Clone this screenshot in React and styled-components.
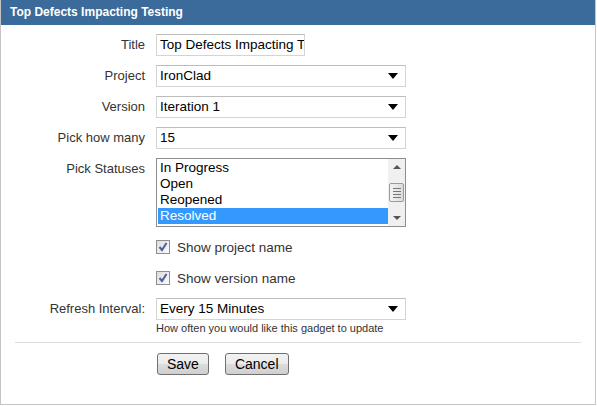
import React from 'react';
import styled, { createGlobalStyle } from 'styled-components';

const GlobalStyle = createGlobalStyle`
  html, body {
    margin: 0;
    padding: 0;
    background: #fff;
  }
  body {
    font-family: "Liberation Sans", Arial, sans-serif;
  }
`;

const Gadget = styled.div`
  width: 594px;
  height: 404px;
  border: 1px solid #c4c4c4;
  border-top: none;
  display: flex;
  flex-direction: column;
`;

const Header = styled.div`
  height: 25px;
  background: #3b6b9b;
  color: #fff;
  font-weight: bold;
  font-size: 12px;
  line-height: 25px;
  padding-left: 9px;
`;

const Form = styled.div`
  padding: 9px 0 0 0;
  display: grid;
  grid-template-columns: 144px 1fr;
  column-gap: 11px;
  row-gap: 9px;
  align-items: start;
`;

const Label = styled.div`
  text-align: right;
  font-size: 13px;
  color: #333;
  line-height: 21px;
`;

const TextInput = styled.div`
  width: 144px;
  height: 20px;
  border: 1px solid #d4d4d4;
  border-top-color: #bcbcbc;
  font-size: 13.5px;
  line-height: 20px;
  padding-left: 3px;
  white-space: nowrap;
  overflow: hidden;
  color: #000;
`;

const SelectBox = styled.div`
  width: 245px;
  height: 20px;
  border: 1px solid #d4d4d4;
  border-top-color: #bcbcbc;
  font-size: 13.5px;
  line-height: 20px;
  padding-left: 3px;
  display: flex;
  align-items: center;
  justify-content: space-between;
  color: #000;
`;

const Arrow = styled.span`
  width: 0;
  height: 0;
  margin-right: 7px;
  border-left: 5px solid transparent;
  border-right: 5px solid transparent;
  border-top: 6px solid #000;
`;

const ListBox = styled.div`
  width: 248px;
  height: 67px;
  border: 1px solid #8e8e8e;
  display: flex;
`;

const Options = styled.div`
  flex: 1;
  padding: 1px 0 0 1px;
`;

const Option = styled.div`
  height: 16px;
  line-height: 16px;
  font-size: 13.5px;
  padding-left: 2px;
  color: ${(p) => (p.selected ? '#fff' : '#000')};
  background: ${(p) => (p.selected ? '#3399ff' : 'transparent')};
`;

const Scrollbar = styled.div`
  width: 17px;
  background: #f0f0f0;
  display: flex;
  flex-direction: column;
  align-items: center;
  justify-content: space-between;
  padding: 6px 0;
`;

const ScrollArrow = styled.span`
  width: 0;
  height: 0;
  border-left: 4px solid transparent;
  border-right: 4px solid transparent;
  ${(p) => (p.up ? 'border-bottom: 4px solid #555;' : 'border-top: 4px solid #555;')}
`;

const Thumb = styled.div`
  width: 15px;
  height: 19px;
  border: 1px solid #9a9a9a;
  border-radius: 2px;
  background: linear-gradient(to right, #f4f4f4, #dcdcdc);
  display: flex;
  flex-direction: column;
  justify-content: center;
  align-items: center;
  gap: 2px;
  box-sizing: border-box;
`;

const Grip = styled.span`
  width: 8px;
  height: 1px;
  background: #777;
`;

const CheckRow = styled.label`
  display: flex;
  align-items: center;
  gap: 7px;
  font-size: 13.5px;
  color: #333;
  height: 22px;
`;

const CheckBox = styled.span`
  width: 12px;
  height: 12px;
  border: 1px solid #8f8f8f;
  background: linear-gradient(135deg, #dcdcdc, #fbfbfb);
  display: inline-flex;
  align-items: center;
  justify-content: center;
`;

const Field = styled.div`
  display: flex;
  flex-direction: column;
`;

const Hint = styled.div`
  font-size: 11px;
  color: #333;
  margin-top: 2px;
`;

const Divider = styled.hr`
  margin: 8px 14px 0 14px;
  border: none;
  border-top: 1px solid #dcdcdc;
`;

const Buttons = styled.div`
  display: flex;
  gap: 16px;
  padding: 10px 0 0 156px;
`;

const Button = styled.button`
  height: 22px;
  padding: 0 ${(p) => p.pad || 10}px;
  font-family: "Liberation Sans", Arial, sans-serif;
  font-size: 14px;
  color: #000;
  border: 1px solid #707070;
  border-radius: 3px;
  background: linear-gradient(to bottom, #f2f2f2 0%, #ebebeb 50%, #dddddd 51%, #cfcfcf 100%);
`;

const Check = () => (
  <svg width="12" height="12" viewBox="0 0 12 12">
    <path d="M2.5 6 L5 9 L9.5 2" fill="none" stroke="#4a5f9b" strokeWidth="2" />
  </svg>
);

const statuses = ['In Progress', 'Open', 'Reopened', 'Resolved'];

export default function App() {
  return (
    <>
      <GlobalStyle />
      <Gadget>
        <Header>Top Defects Impacting Testing</Header>
        <Form>
          <Label>Title</Label>
          <TextInput>Top Defects Impacting Testing</TextInput>

          <Label>Project</Label>
          <SelectBox>IronClad<Arrow /></SelectBox>

          <Label>Version</Label>
          <SelectBox>Iteration 1<Arrow /></SelectBox>

          <Label>Pick how many</Label>
          <SelectBox>15<Arrow /></SelectBox>

          <Label>Pick Statuses</Label>
          <ListBox>
            <Options>
              {statuses.map((s) => (
                <Option key={s} selected={s === 'Resolved'}>{s}</Option>
              ))}
            </Options>
            <Scrollbar>
              <ScrollArrow up />
              <Thumb><Grip /><Grip /><Grip /><Grip /></Thumb>
              <ScrollArrow />
            </Scrollbar>
          </ListBox>

          <div />
          <CheckRow><CheckBox><Check /></CheckBox>Show project name</CheckRow>

          <div />
          <CheckRow><CheckBox><Check /></CheckBox>Show version name</CheckRow>

          <Label>Refresh Interval:</Label>
          <Field>
            <SelectBox>Every 15 Minutes<Arrow /></SelectBox>
            <Hint>How often you would like this gadget to update</Hint>
          </Field>
        </Form>
        <Divider />
        <Buttons>
          <Button pad={9}>Save</Button>
          <Button pad={9}>Cancel</Button>
        </Buttons>
      </Gadget>
    </>
  );
}
